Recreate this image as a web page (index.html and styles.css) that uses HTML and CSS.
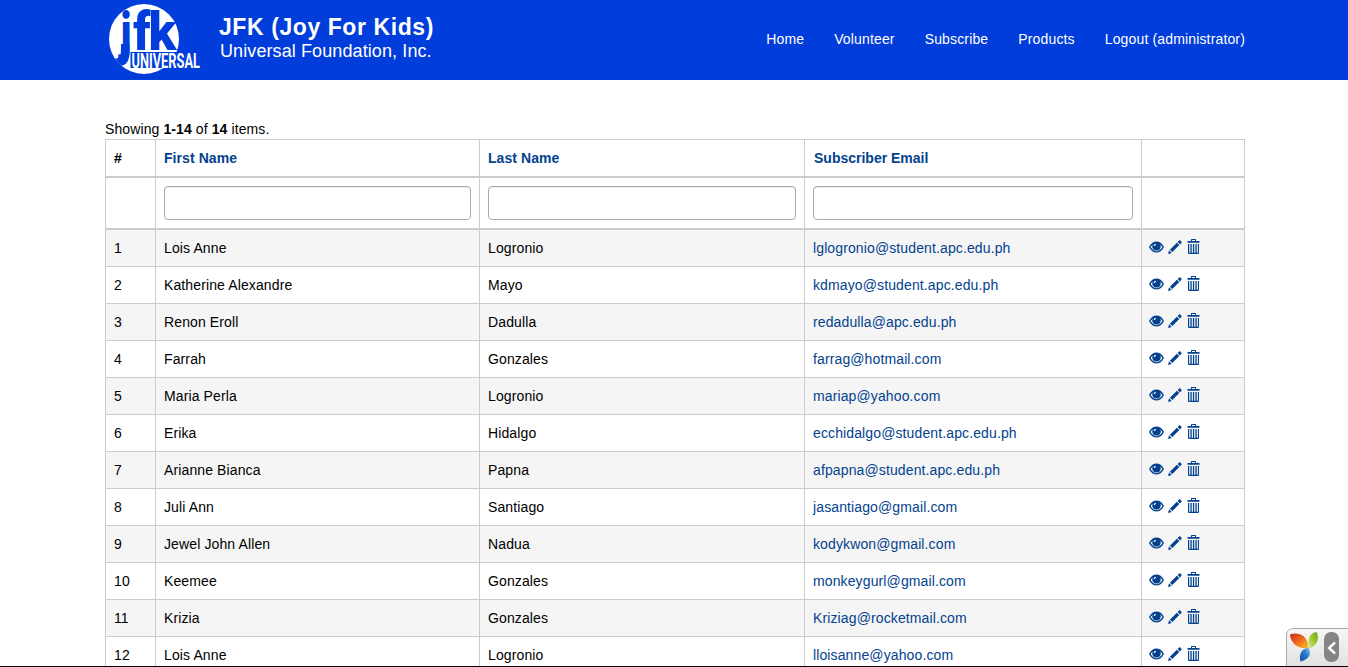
FILE: index.html
```
<!DOCTYPE html>
<html lang="en">
<head>
<meta charset="utf-8">
<title>Subscribers</title>
<link rel="stylesheet" href="styles.css">
</head>
<body>
<svg class="defs" aria-hidden="true">
  <symbol id="eye" viewBox="0 0 15 12"><path fill-rule="evenodd" d="M0 6C2 2.300 4.500.500 7.500.500S13 2.300 15 6c-2 3.700-4.500 5.500-7.500 5.500S2 9.700 0 6zm1.600 0c1.500 2.700 3.500 4.200 5.900 4.200s4.400-1.500 5.900-4.200c-.7-1.200-1.500-2.100-2.400-2.800.5.700.8 1.500.8 2.300a4.300 4.100 0 0 1-8.600 0c0-.8.300-1.600.8-2.300C3.100 3.900 2.300 4.800 1.600 6zm4.700-3.200c-.9.300-1.500 1.100-1.500 2.100l1.200.2c.1-.7.400-1.100 1-1.300z"/></symbol>
  <symbol id="pencil" viewBox="0 0 14 14"><path d="M0 14l1.100-3.700 2.600 2.600zM1.900 9.700l7-7 2.400 2.400-7 7zM9.600 2l1.300-1.300c.5-.5 1-.5 1.500 0l.9.900c.5.500.5 1 0 1.500L12 4.400z"/></symbol>
  <symbol id="trash" viewBox="0 0 13 15"><path fill-rule="evenodd" d="M4 2V.5Q4 0 4.500 0h4Q9 0 9 .5V2h3.500v1.700H.500V2zm1 0h3V1H5zM1 5h11v9q0 1-1 1H2q-1 0-1-1zm1.200 0v8.800h1.200V5zm2.500 0v8.800h1.200V5zm2.500 0v8.800h1.200V5zm2.500 0v8.800h1.200V5z"/></symbol>
</svg>
<header class="navbar">
  <div class="container">
    <a class="brand">
      <svg class="logo" viewBox="0 0 96 76">
        <defs><clipPath id="disc"><circle cx="39" cy="39" r="35"/></clipPath></defs>
        <circle cx="39" cy="39" r="35" fill="#fff"/>
        <g clip-path="url(#disc)">
          <g class="logo-initials">
            <text transform="translate(15.500 50) scale(.74 1)">j</text>
            <text transform="translate(28.300 50) scale(.88 1)">f</text>
            <text transform="translate(43.500 50) scale(.94 1)">k</text>
          </g>
          <path class="logo-band" d="M16 44h8.500v8C24.500 60 22 65.500 15 66H3v-8.500C8 59 13 59.500 15 56 16 54 16 50 16 44z"/>
        </g>
        <path class="logo-band" d="M25.500 52h70v16h-70z"/>
        <text class="logo-name" x="26.500" y="67.500" textLength="68.500" lengthAdjust="spacingAndGlyphs">UNIVERSAL</text>
      </svg>
      <span class="brand-text"><strong>JFK (Joy For Kids)</strong><span>Universal Foundation, Inc.</span></span>
    </a>
    <nav class="menu"><a>Home</a><a>Volunteer</a><a>Subscribe</a><a>Products</a><a>Logout (administrator)</a></nav>
  </div>
</header>
<main class="content">
  <div class="summary">Showing <b>1-14</b> of <b>14</b> items.</div>
  <table class="grid">
    <colgroup><col class="c-num"><col class="c-first"><col class="c-last"><col class="c-email"><col class="c-actions"></colgroup>
    <thead>
      <tr class="titles"><th>#</th><th><a>First Name</a></th><th><a>Last Name</a></th><th><a class="nudge">Subscriber Email</a></th><th></th></tr>
      <tr class="filters"><td></td><td><input type="text"></td><td><input type="text"></td><td><input type="text"></td><td></td></tr>
    </thead>
    <tbody id="rows"></tbody>
  </table>
</main>
<div class="debug">
  <svg class="yii" viewBox="0 0 30 32">
    <defs>
      <linearGradient id="gr" x1="0" y1="0" x2="1" y2="1"><stop offset="0" stop-color="#c9281c"/><stop offset=".5" stop-color="#ee6a1c"/><stop offset="1" stop-color="#fbc02c"/></linearGradient>
      <linearGradient id="gg" x1="1" y1="0" x2="0" y2="1"><stop offset="0" stop-color="#6aa51f"/><stop offset=".5" stop-color="#9fca2a"/><stop offset="1" stop-color="#dcea8a"/></linearGradient>
      <linearGradient id="gb" x1="0" y1="1" x2="1" y2="0"><stop offset="0" stop-color="#0b4ea5"/><stop offset=".6" stop-color="#2f80d0"/><stop offset="1" stop-color="#9bd0ef"/></linearGradient>
    </defs>
    <path fill="url(#gr)" d="M0 2.500C7-.500 19 3 18 16 8 18 0 10 0 2.500z"/>
    <path fill="url(#gg)" d="M26.500 0C20 .500 16.500 7 19.500 16.500 27 14 30 6 26.500 0z"/>
    <path fill="url(#gb)" d="M10.500 29.500C8.500 22 11.500 17 18.500 15.500 22.500 22 18 28 10.500 29.500z"/>
  </svg>
  <span class="toggle"><svg viewBox="0 0 15 30"><path d="M11 10.500L5 16l6 5.500"/></svg></span>
</div>
<div class="edge"></div>
<script src="rows.js"></script>
</body>
</html>
```
FILE: styles.css
```
* { box-sizing: border-box; }
html, body { height: 100%; }
body { margin: 0; overflow: hidden; background: #fff; color: #000; font: 14px/20px "Liberation Sans", Arial, sans-serif; }
.defs { position: absolute; width: 0; height: 0; }
.navbar { height: 80px; background: #003dda; color: #fff; }
.container { width: 1140px; height: 80px; margin-left: 105px; display: flex; justify-content: space-between; }
.brand { display: flex; }
.logo { width: 96px; height: 76px; display: block; overflow: visible; }
.logo-initials { fill: #003dda; font: 900 54px Roboto, sans-serif; }
.logo-band { fill: #003dda; }
.logo-name { fill: #fff; font: 700 19.500px Roboto, sans-serif; }
.brand-text { display: flex; flex-direction: column; padding: 14px 0 0 18px; white-space: nowrap; }
.brand-text strong { font-size: 23px; line-height: 26px; letter-spacing: .58px; }
.brand-text span { font-size: 18px; line-height: 22px; letter-spacing: .1px; padding-left: 1px; }
.menu { display: flex; gap: 30px; padding-top: 29px; letter-spacing: .15px; }
.content { width: 1140px; margin-left: 105px; padding-top: 39px; }
.summary { height: 20px; letter-spacing: .1px; }
.grid { width: 1140px; table-layout: fixed; border-collapse: separate; border-spacing: 0; border: solid #ccc; border-width: 1px 1px 0 0; }
.c-num { width: 50px; }
.c-first { width: 324px; }
.c-last { width: 325px; }
.c-email { width: 337px; }
.grid th, .grid td { height: 37px; padding: 0 8px; border: solid #ccc; border-width: 0 0 1px 1px; text-align: left; vertical-align: middle; }
.grid td { letter-spacing: .12px; }
.grid .titles th { height: 38px; border-bottom-width: 2px; letter-spacing: .07px; }
.grid .filters td { height: 52px; border-bottom-width: 2px; }
.grid input { display: block; width: 100%; height: 34px; border: 1px solid #aaa; border-radius: 4px; background: #fff; box-shadow: inset 0 1px 1px rgba(0,0,0,.075); }
.grid a { color: #03428e; }
.grid .nudge { margin-left: 1px; letter-spacing: 0; }
.grid tbody tr:nth-child(odd) { background: #f5f5f5; }
.actions { display: flex; height: 20px; margin-left: -1px; fill: #03428e; }
.actions svg { display: block; }
.i-eye { width: 15px; height: 12px; margin-top: 3px; }
.i-pencil { width: 14px; height: 14px; margin: 2px 0 0 3.500px; }
.i-trash { width: 13px; height: 15px; margin: 1px 0 0 5px; }
.debug { position: fixed; left: 1286px; top: 628px; width: 70px; height: 48px; display: flex; padding: 3px 0 0 3px; border: 1px solid #aaa; border-radius: 7px; background: linear-gradient(#f7f7f7, #ddd); }
.yii { width: 30px; height: 32px; }
.toggle { width: 15px; height: 30px; margin-left: 4px; border-radius: 7px; background: #858585; }
.toggle svg { display: block; fill: none; stroke: #fff; stroke-width: 2.400; }
.edge { position: fixed; left: 0; right: 0; bottom: 0; height: 1px; background: #000; }
```
FILE: rows.js
```
const people = [
  ["Lois Anne", "Logronio", "lglogronio@student.apc.edu.ph"],
  ["Katherine Alexandre", "Mayo", "kdmayo@student.apc.edu.ph"],
  ["Renon Eroll", "Dadulla", "redadulla@apc.edu.ph"],
  ["Farrah", "Gonzales", "farrag@hotmail.com"],
  ["Maria Perla", "Logronio", "mariap@yahoo.com"],
  ["Erika", "Hidalgo", "ecchidalgo@student.apc.edu.ph"],
  ["Arianne Bianca", "Papna", "afpapna@student.apc.edu.ph"],
  ["Juli Ann", "Santiago", "jasantiago@gmail.com"],
  ["Jewel John Allen", "Nadua", "kodykwon@gmail.com"],
  ["Keemee", "Gonzales", "monkeygurl@gmail.com"],
  ["Krizia", "Gonzales", "Kriziag@rocketmail.com"],
  ["Lois Anne", "Logronio", "lloisanne@yahoo.com"]
];
const icon = name => `<svg class="i-${name}"><use href="#${name}"/></svg>`;
document.getElementById("rows").innerHTML = people.map(([first, last, email], i) =>
  `<tr><td>${i + 1}</td><td>${first}</td><td>${last}</td><td><a>${email}</a></td><td><div class="actions">${icon("eye")}${icon("pencil")}${icon("trash")}</div></td></tr>`
).join("");
```
